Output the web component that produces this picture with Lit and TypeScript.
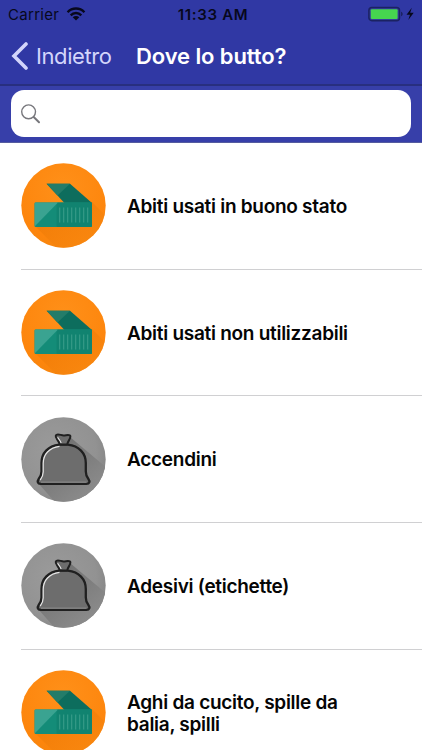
import { LitElement, html, css, svg } from "lit";
import { customElement, property } from "lit/decorators.js";

type Kind = "container" | "bag";

@customElement("waste-icon")
export class WasteIcon extends LitElement {
  @property() kind: Kind = "container";

  static styles = css`
    :host { display: block; width: 85px; height: 85px; flex: none; }
    svg { display: block; width: 100%; height: 100%; }
  `;

  private container() {
    return svg`
      <defs>
        <radialGradient id="o" cx=".5" cy=".3" r=".75">
          <stop offset="0" stop-color="#ff9019"/><stop offset=".8" stop-color="#fd850c"/><stop offset="1" stop-color="#f5860f"/>
        </radialGradient>
        <linearGradient id="s" x1="0" y1="0" x2="1" y2="1">
          <stop offset="0" stop-color="#e87300"/><stop offset="1" stop-color="#fb8c14"/>
        </linearGradient>
        <clipPath id="c"><circle cx="42.5" cy="42.5" r="42.2"/></clipPath>
      </defs>
      <circle cx="42.5" cy="42.5" r="42.2" fill="url(#o)"/>
      <path clip-path="url(#c)" d="M14 63 L71 39 L85 53 V85 H36 Z" fill="url(#s)" opacity=".65"/>
      <g transform="translate(0 .6)">
        <path d="M25.6 20.2 H49 L71 39.4 H43.4 Z" fill="#0d6d5d"/>
        <path d="M25.6 20.2 H49 L36.5 32 Z" fill="#237c69"/>
        <rect x="13.6" y="39" width="57.4" height="24.4" rx="1.2" fill="#148c78"/>
        <rect x="35.5" y="39" width="35.5" height="24.4" rx="1.2" fill="#118370"/>
        <path d="M14.2 39 H37 L13.6 63 V40 Z" fill="#3aa391"/>
        <path d="M38.7 43.8V59M42.7 43.8V59M46.7 43.8V59M50.7 43.8V59M54.7 43.8V59M58.7 43.8V59M62.7 43.8V59M66.7 43.8V59" stroke="#399c89" stroke-width="1.1"/>
      </g>
    `;
  }

  private bag() {
    return svg`
      <defs>
        <radialGradient id="g" cx=".4" cy=".4" r=".65">
          <stop offset="0" stop-color="#9b9b9b"/><stop offset=".75" stop-color="#929292"/><stop offset="1" stop-color="#858585"/>
        </radialGradient>
        <linearGradient id="h" x1=".2" y1=".1" x2=".8" y2=".8">
          <stop offset="0" stop-color="#707070"/><stop offset="1" stop-color="#8a8a8a"/>
        </linearGradient>
        <clipPath id="c"><circle cx="42.5" cy="42.5" r="42.2"/></clipPath>
      </defs>
      <circle cx="42.5" cy="42.5" r="42.2" fill="url(#g)"/>
      <path clip-path="url(#c)" d="M49 20 L86 51 V85 H34 L17 66 Z" fill="url(#h)"/>
      <path d="M38.2 27.7 C27 29 20.5 36 20.5 46 V54.5 C20.5 58.2 19.2 60 17.7 62 C16 64.6 16.6 66.8 19.6 66.8 H65.4 C68.6 66.8 69.2 64.6 67.4 62 C65.8 60 64.8 58.2 64.8 54.5 V46 C64.8 36 58 29 46.8 27.7 Z" fill="#6d6d6d" stroke="#202020" stroke-width="2.3" stroke-linejoin="round"/>
      <path d="M38.6 27.4 C37.8 23.2 33.8 20.8 34.8 18.4 C36 16 40 18.4 42.5 18.4 C45.3 18.4 49 16.9 49.4 19.2 C49.7 22 46.8 24 46.2 27.4 Z" fill="#6d6d6d" stroke="#202020" stroke-width="2" stroke-linejoin="round"/>
      <path d="M36.6 20.3 C38 22.6 39.7 24 40.1 26 M38.5 29.4 C28.3 30.8 22.2 37.3 22.2 46.4 V55 C22.2 58.6 20.9 60.8 19.2 63.2" fill="none" stroke="#e6e6e6" stroke-width="1.2"/>
      <path d="M20 65.2 H65.5" stroke="#a7a7a7" stroke-width=".7"/>
    `;
  }

  render() {
    return html`<svg viewBox="0 0 85 85">${this.kind === "bag" ? this.bag() : this.container()}</svg>`;
  }
}

@customElement("app-root")
export class AppRoot extends LitElement {
  private items: { label: string; kind: Kind }[] = [
    { label: "Abiti usati in buono stato", kind: "container" },
    { label: "Abiti usati non utilizzabili", kind: "container" },
    { label: "Accendini", kind: "bag" },
    { label: "Adesivi (etichette)", kind: "bag" },
    { label: "Aghi da cucito, spille da balia, spilli", kind: "container" },
  ];

  static styles = css`
    :host {
      display: flex; flex-direction: column; height: 750px; overflow: hidden;
      background: #fff; color: #050505; font-family: Inter, "Liberation Sans", sans-serif;
    }
    .status {
      height: 28px; flex: none; display: grid; grid-template-columns: 1fr auto 1fr; align-items: center;
      padding: 0 6px 0 8px; background: #3038a4; color: #07081c; font-size: 15px;
    }
    .carrier { display: flex; align-items: center; gap: 7px; letter-spacing: .3px; }
    .time { font-weight: 600; letter-spacing: .7px; padding-left: 2px; }
    .power { display: flex; align-items: center; justify-content: flex-end; }
    svg { display: block; flex: none; }
    .nav {
      height: 56px; flex: none; display: flex; align-items: center; padding-left: 11px;
      background: #3038a4; border-bottom: 2px solid #282f7f; box-sizing: content-box;
    }
    .back { color: #d3d5fb; font-size: 22px; margin-left: 8px; width: 100px; letter-spacing: -.4px; }
    .title { color: #fff; font-size: 22px; font-weight: 600; letter-spacing: -.1px; white-space: nowrap; }
    .search { height: 57px; flex: none; box-sizing: border-box; padding: 4px 11px 5px; background: #373fa9; border-bottom: 1px solid #555c9f; }
    .field { height: 47px; border-radius: 13px; background: #fff; display: flex; align-items: center; padding-left: 9px; box-sizing: border-box; }
    .list { display: flex; flex-direction: column; }
    .row { height: 126.7px; flex: none; box-sizing: border-box; margin-left: 21px; border-bottom: 1px solid #d0d0d2; display: flex; align-items: center; gap: 21px; }
    .label { width: 240px; padding-top: 2px; font-size: 19px; font-weight: 600; line-height: 22px; letter-spacing: -.28px; }
  `;

  render() {
    return html`
      <div class="status">
        <div class="carrier">
          <span>Carrier</span>
          <svg width="20" height="14" viewBox="0 0 20 14">
            <g fill="none" stroke="#07081c" stroke-width="2.4">
              <path d="M1.6 5.2 C6.2 .3 13.8 .3 18.4 5.2"/><path d="M4.7 8.3 C7.6 5.3 12.4 5.3 15.3 8.3"/>
            </g>
            <path d="M6.7 10.2 C8.5 8.5 11.5 8.5 13.3 10.2 L10 13.5 Z" fill="#07081c"/>
          </svg>
        </div>
        <span class="time">11:33 AM</span>
        <div class="power">
          <svg width="48" height="16" viewBox="0 0 48 16">
            <rect x=".9" y="1.4" width="30.6" height="13.3" rx="3" fill="#343f99" stroke="#1b2263" stroke-width="1.5"/>
            <rect x="2.8" y="3.2" width="26.8" height="9.8" rx="1" fill="#46d64f"/>
            <path d="M33 5.8 C35.3 6.5 35.3 9.6 33 10.3 Z" fill="#1b2263"/>
            <path d="M43.8 1.8 L38.5 8.8 H42 L40.3 14 L45.7 6.8 H42.2 Z" fill="#07081c"/>
          </svg>
        </div>
      </div>
      <div class="nav">
        <svg width="17" height="28" viewBox="0 0 17 28"><path d="M15 2 L3 14 L15 26" fill="none" stroke="#d3d5fb" stroke-width="3.6" stroke-linecap="round"/></svg>
        <span class="back">Indietro</span>
        <span class="title">Dove lo butto?</span>
      </div>
      <div class="search">
        <div class="field">
          <svg width="21" height="20" viewBox="0 0 21 20"><g fill="none" stroke="#77777c" stroke-linecap="round"><circle cx="8.6" cy="7.8" r="6.9" stroke-width="1.4"/><path d="M13.7 13 L19 18.2" stroke-width="2"/></g></svg>
        </div>
      </div>
      <div class="list">
        ${this.items.map((i) => html`<div class="row"><waste-icon .kind=${i.kind}></waste-icon><span class="label">${i.label}</span></div>`)}
      </div>
    `;
  }
}
